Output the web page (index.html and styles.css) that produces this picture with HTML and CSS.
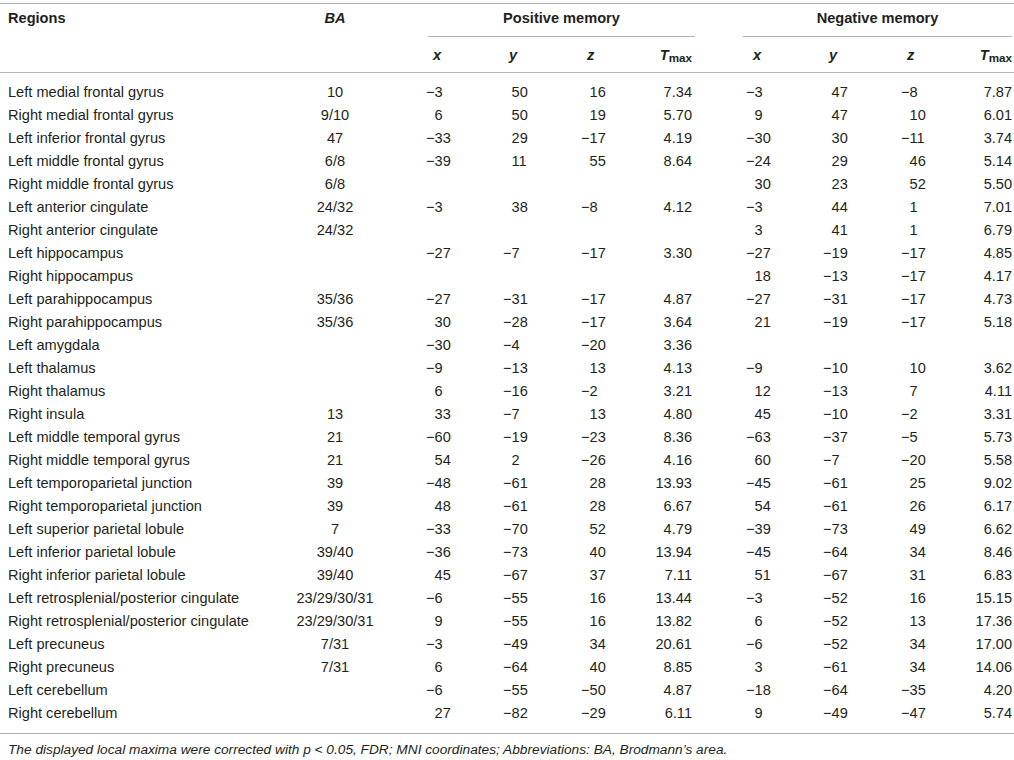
FILE: index.html
```html
<!DOCTYPE html>
<html>
<head>
<meta charset="utf-8">
<link rel="stylesheet" href="styles.css">
</head>
<body>
<table class="tbl">
<colgroup>
<col class="w-reg"><col class="w-ba"><col class="w-x"><col class="w-y"><col class="w-z"><col class="w-t"><col class="w-x"><col class="w-y"><col class="w-z"><col class="w-t2">
</colgroup>
<thead>
<tr class="h1">
<th class="reg">Regions</th>
<th class="ba"><i>BA</i></th>
<th colspan="4"><div class="grp grp-pos">Positive memory</div></th>
<th colspan="4"><div class="grp grp-neg">Negative memory</div></th>
</tr>
<tr class="h2">
<th></th><th></th>
<th class="hx"><i>x</i></th><th class="hc"><i>y</i></th><th class="hc"><i>z</i></th><th class="ht"><i>T</i><sub>max</sub></th>
<th class="hx"><i>x</i></th><th class="hc"><i>y</i></th><th class="hc"><i>z</i></th><th class="ht t2"><i>T</i><sub>max</sub></th>
</tr>
</thead>
<tbody>
<tr><td class="reg">Left medial frontal gyrus</td><td class="ba">10</td><td class="c cx">−3</td><td class="c p">50</td><td class="c p">16</td><td class="t">7.34</td><td class="c cx">−3</td><td class="c p">47</td><td class="c">−8</td><td class="t t2">7.87</td></tr>
<tr><td class="reg">Right medial frontal gyrus</td><td class="ba">9/10</td><td class="c cx p">6</td><td class="c p">50</td><td class="c p">19</td><td class="t">5.70</td><td class="c cx p">9</td><td class="c p">47</td><td class="c p">10</td><td class="t t2">6.01</td></tr>
<tr><td class="reg">Left inferior frontal gyrus</td><td class="ba">47</td><td class="c cx">−33</td><td class="c p">29</td><td class="c">−17</td><td class="t">4.19</td><td class="c cx">−30</td><td class="c p">30</td><td class="c">−11</td><td class="t t2">3.74</td></tr>
<tr><td class="reg">Left middle frontal gyrus</td><td class="ba">6/8</td><td class="c cx">−39</td><td class="c p">11</td><td class="c p">55</td><td class="t">8.64</td><td class="c cx">−24</td><td class="c p">29</td><td class="c p">46</td><td class="t t2">5.14</td></tr>
<tr><td class="reg">Right middle frontal gyrus</td><td class="ba">6/8</td><td class="c cx"></td><td class="c"></td><td class="c"></td><td class="t"></td><td class="c cx p">30</td><td class="c p">23</td><td class="c p">52</td><td class="t t2">5.50</td></tr>
<tr><td class="reg">Left anterior cingulate</td><td class="ba">24/32</td><td class="c cx">−3</td><td class="c p">38</td><td class="c">−8</td><td class="t">4.12</td><td class="c cx">−3</td><td class="c p">44</td><td class="c p">1</td><td class="t t2">7.01</td></tr>
<tr><td class="reg">Right anterior cingulate</td><td class="ba">24/32</td><td class="c cx"></td><td class="c"></td><td class="c"></td><td class="t"></td><td class="c cx p">3</td><td class="c p">41</td><td class="c p">1</td><td class="t t2">6.79</td></tr>
<tr><td class="reg">Left hippocampus</td><td class="ba"></td><td class="c cx">−27</td><td class="c">−7</td><td class="c">−17</td><td class="t">3.30</td><td class="c cx">−27</td><td class="c">−19</td><td class="c">−17</td><td class="t t2">4.85</td></tr>
<tr><td class="reg">Right hippocampus</td><td class="ba"></td><td class="c cx"></td><td class="c"></td><td class="c"></td><td class="t"></td><td class="c cx p">18</td><td class="c">−13</td><td class="c">−17</td><td class="t t2">4.17</td></tr>
<tr><td class="reg">Left parahippocampus</td><td class="ba">35/36</td><td class="c cx">−27</td><td class="c">−31</td><td class="c">−17</td><td class="t">4.87</td><td class="c cx">−27</td><td class="c">−31</td><td class="c">−17</td><td class="t t2">4.73</td></tr>
<tr><td class="reg">Right parahippocampus</td><td class="ba">35/36</td><td class="c cx p">30</td><td class="c">−28</td><td class="c">−17</td><td class="t">3.64</td><td class="c cx p">21</td><td class="c">−19</td><td class="c">−17</td><td class="t t2">5.18</td></tr>
<tr><td class="reg">Left amygdala</td><td class="ba"></td><td class="c cx">−30</td><td class="c">−4</td><td class="c">−20</td><td class="t">3.36</td><td class="c cx"></td><td class="c"></td><td class="c"></td><td class="t t2"></td></tr>
<tr><td class="reg">Left thalamus</td><td class="ba"></td><td class="c cx">−9</td><td class="c">−13</td><td class="c p">13</td><td class="t">4.13</td><td class="c cx">−9</td><td class="c">−10</td><td class="c p">10</td><td class="t t2">3.62</td></tr>
<tr><td class="reg">Right thalamus</td><td class="ba"></td><td class="c cx p">6</td><td class="c">−16</td><td class="c">−2</td><td class="t">3.21</td><td class="c cx p">12</td><td class="c">−13</td><td class="c p">7</td><td class="t t2">4.11</td></tr>
<tr><td class="reg">Right insula</td><td class="ba">13</td><td class="c cx p">33</td><td class="c">−7</td><td class="c p">13</td><td class="t">4.80</td><td class="c cx p">45</td><td class="c">−10</td><td class="c">−2</td><td class="t t2">3.31</td></tr>
<tr><td class="reg">Left middle temporal gyrus</td><td class="ba">21</td><td class="c cx">−60</td><td class="c">−19</td><td class="c">−23</td><td class="t">8.36</td><td class="c cx">−63</td><td class="c">−37</td><td class="c">−5</td><td class="t t2">5.73</td></tr>
<tr><td class="reg">Right middle temporal gyrus</td><td class="ba">21</td><td class="c cx p">54</td><td class="c p">2</td><td class="c">−26</td><td class="t">4.16</td><td class="c cx p">60</td><td class="c">−7</td><td class="c">−20</td><td class="t t2">5.58</td></tr>
<tr><td class="reg">Left temporoparietal junction</td><td class="ba">39</td><td class="c cx">−48</td><td class="c">−61</td><td class="c p">28</td><td class="t">13.93</td><td class="c cx">−45</td><td class="c">−61</td><td class="c p">25</td><td class="t t2">9.02</td></tr>
<tr><td class="reg">Right temporoparietal junction</td><td class="ba">39</td><td class="c cx p">48</td><td class="c">−61</td><td class="c p">28</td><td class="t">6.67</td><td class="c cx p">54</td><td class="c">−61</td><td class="c p">26</td><td class="t t2">6.17</td></tr>
<tr><td class="reg">Left superior parietal lobule</td><td class="ba">7</td><td class="c cx">−33</td><td class="c">−70</td><td class="c p">52</td><td class="t">4.79</td><td class="c cx">−39</td><td class="c">−73</td><td class="c p">49</td><td class="t t2">6.62</td></tr>
<tr><td class="reg">Left inferior parietal lobule</td><td class="ba">39/40</td><td class="c cx">−36</td><td class="c">−73</td><td class="c p">40</td><td class="t">13.94</td><td class="c cx">−45</td><td class="c">−64</td><td class="c p">34</td><td class="t t2">8.46</td></tr>
<tr><td class="reg">Right inferior parietal lobule</td><td class="ba">39/40</td><td class="c cx p">45</td><td class="c">−67</td><td class="c p">37</td><td class="t">7.11</td><td class="c cx p">51</td><td class="c">−67</td><td class="c p">31</td><td class="t t2">6.83</td></tr>
<tr><td class="reg">Left retrosplenial/posterior cingulate</td><td class="ba">23/29/30/31</td><td class="c cx">−6</td><td class="c">−55</td><td class="c p">16</td><td class="t">13.44</td><td class="c cx">−3</td><td class="c">−52</td><td class="c p">16</td><td class="t t2">15.15</td></tr>
<tr><td class="reg">Right retrosplenial/posterior cingulate</td><td class="ba">23/29/30/31</td><td class="c cx p">9</td><td class="c">−55</td><td class="c p">16</td><td class="t">13.82</td><td class="c cx p">6</td><td class="c">−52</td><td class="c p">13</td><td class="t t2">17.36</td></tr>
<tr><td class="reg">Left precuneus</td><td class="ba">7/31</td><td class="c cx">−3</td><td class="c">−49</td><td class="c p">34</td><td class="t">20.61</td><td class="c cx">−6</td><td class="c">−52</td><td class="c p">34</td><td class="t t2">17.00</td></tr>
<tr><td class="reg">Right precuneus</td><td class="ba">7/31</td><td class="c cx p">6</td><td class="c">−64</td><td class="c p">40</td><td class="t">8.85</td><td class="c cx p">3</td><td class="c">−61</td><td class="c p">34</td><td class="t t2">14.06</td></tr>
<tr><td class="reg">Left cerebellum</td><td class="ba"></td><td class="c cx">−6</td><td class="c">−55</td><td class="c">−50</td><td class="t">4.87</td><td class="c cx">−18</td><td class="c">−64</td><td class="c">−35</td><td class="t t2">4.20</td></tr>
<tr><td class="reg">Right cerebellum</td><td class="ba"></td><td class="c cx p">27</td><td class="c">−82</td><td class="c">−29</td><td class="t">6.11</td><td class="c cx p">9</td><td class="c">−49</td><td class="c">−47</td><td class="t t2">5.74</td></tr>
</tbody>
</table>
<p class="note">The displayed local maxima were corrected with p &lt; 0.05, FDR; MNI coordinates; Abbreviations: BA, Brodmann’s area.</p>
</body>
</html>
```

FILE: styles.css
```css
body {
  margin: 0;
  background: #ffffff;
  color: #231f20;
  font-family: "Liberation Sans", Arial, sans-serif;
  font-size: 14.6px;
}

.tbl {
  border-collapse: collapse;
  table-layout: fixed;
  width: 1014px;
  margin-top: 3px;
  border-top: 1px solid #b4b4b4;
  border-bottom: 1px solid #b4b4b4;
}

.w-reg { width: 290px; }
.w-ba { width: 90px; }
.w-x { width: 116px; }
.w-y { width: 78px; }
.w-z { width: 76px; }
.w-t { width: 50px; }
.w-t2 { width: 44px; }

.tbl th,
.tbl td {
  padding: 0;
  white-space: nowrap;
  text-align: left;
  font-weight: normal;
  line-height: 23px;
}

.tbl thead th {
  font-weight: bold;
  line-height: 20px;
  vertical-align: top;
}

.h1 th { padding-top: 4px; }

.h2 th {
  padding-top: 8px;
  padding-bottom: 7px;
  border-bottom: 1px solid #b4b4b4;
}

.tbl .reg { padding-left: 8px; }
.tbl .ba { text-align: center; }

.grp {
  text-align: center;
  padding-bottom: 8px;
  border-bottom: 1px solid #b4b4b4;
}
.grp-pos { margin-left: 48px; margin-right: 5px; }
.grp-neg { margin-left: 43px; margin-right: 2px; }

.tbl .hx { padding-left: 53px; }
.tbl .hc { padding-left: 13px; }
.tbl .ht { text-align: right; padding-right: 8px; }
.tbl .ht.t2 { padding-right: 2px; }

.tbl sub {
  font-size: 0.8em;
  font-style: normal;
  vertical-align: -2px;
  line-height: 0;
}

.tbl .c { padding-left: 7px; }
.tbl .c.cx { padding-left: 46px; }
.p::before {
  content: "\2212";
  visibility: hidden;
}
.tbl .t { text-align: right; padding-right: 8px; }
.tbl .t.t2 { padding-right: 2px; }

.tbl tbody tr:first-child td { padding-top: 8px; }
.tbl tbody tr:last-child td { padding-bottom: 8px; }

.note {
  margin: 7px 0 0 8px;
  font-style: italic;
  font-size: 13.7px;
  line-height: 18px;
}
```
